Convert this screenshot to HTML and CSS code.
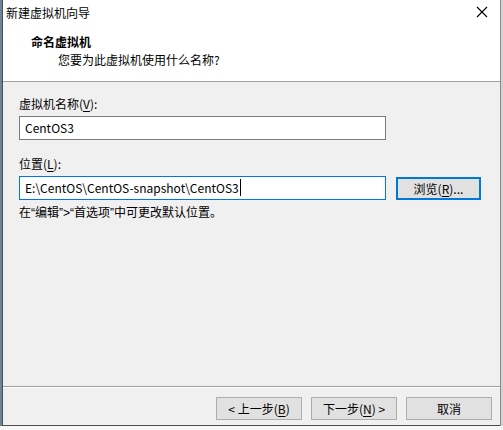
FILE: index.html
```html
<!DOCTYPE html>
<html lang="zh">
<head>
<meta charset="utf-8">
<link rel="stylesheet" href="styles.css">
</head>
<body>
<div class="screen">
  <div class="desk-left"></div>
  <div class="window">
    <div class="titlebar">
      <span class="title">新建虚拟机向导</span>
      <svg class="close" width="12" height="12" viewBox="0 0 12 12"><path d="M1 1L11 11M11 1L1 11" stroke="#000" stroke-width="1.1" fill="none"/></svg>
    </div>
    <div class="header">
      <div class="h-title">命名虚拟机</div>
      <div class="h-sub">您要为此虚拟机使用什么名称?</div>
    </div>
    <div class="body">
      <div class="label">虚拟机名称(<u>V</u>):</div>
      <div class="field">CentOS3</div>
      <div class="label label2">位置(<u>L</u>):</div>
      <div class="row">
        <div class="field focus"><span class="caret">E:\CentOS\CentOS-snapshot\CentOS3</span></div>
        <div class="btn browse">浏览(<u>R</u>)...</div>
      </div>
      <div class="hint">在<span class="q">“</span>编辑<span class="q">”&gt;“</span>首选项<span class="q">”</span>中可更改默认位置。</div>
    </div>
    <div class="footer">
      <div class="btn">&lt; 上一步(<u>B</u>)</div>
      <div class="btn">下一步(<u>N</u>) &gt;</div>
      <div class="btn">取消</div>
    </div>
  </div>
  <div class="desk-right"></div>
</div>
<div class="below"></div>
</body>
</html>
```
FILE: styles.css
```css
html, body {
  margin: 0;
  padding: 0;
}
body {
  width: 503px;
  height: 430px;
  overflow: hidden;
  background: #f4f4f4;
  font-family: "Noto Sans CJK SC", "Microsoft YaHei", sans-serif;
  font-size: 12px;
  color: #000;
}
.screen {
  display: flex;
  height: 426px;
}
.desk-left {
  width: 2px;
  background: #6c8597;
}
.desk-right {
  width: 2px;
  background: #d4d4d4;
  border-left: 1px solid #8a8a8a;
}
.window {
  width: 498px;
  border-left: 1px solid #4d4d4d;
  border-bottom: 1px solid #4d4d4d;
  background: #f0f0f0;
  display: flex;
  flex-direction: column;
}
.titlebar {
  height: 28px;
  background: #fff;
  display: flex;
  align-items: center;
  justify-content: space-between;
  padding: 0 12px 0 3px;
}
.title {
  line-height: 1;
  margin-top: -2px;
}
.close {
  margin-top: -4px;
}
.header {
  background: #fff;
  border-bottom: 1px solid #a0a0a0;
  padding-left: 28px;
  box-sizing: border-box;
  height: 54px;
}
.h-title {
  font-weight: bold;
  line-height: 18px;
  margin-top: 5px;
}
.h-sub {
  padding-left: 27px;
  line-height: 18px;
}
.body {
  flex: 1;
  padding: 13px 0 0 16px;
  border-bottom: 1px solid #a0a0a0;
  box-shadow: 0 1px 0 #fff;
}
.label {
  line-height: 18px;
  margin-bottom: 3px;
}
.label2 {
  margin-top: 15px;
}
u {
  text-decoration: underline;
  text-underline-offset: 2px;
}
.field {
  height: 22px;
  border: 1px solid #7a7a7a;
  background: #fff;
  padding-left: 5px;
  box-sizing: content-box;
  line-height: 22px;
  width: 360px;
}
.field.focus {
  border-color: #0078d7;
}
.caret {
  border-right: 1px solid #000;
  padding-right: 1px;
}
.row {
  display: flex;
  align-items: center;
  gap: 10px;
}
.btn {
  width: 84px;
  height: 21px;
  border: 1px solid #adadad;
  background: #e1e1e1;
  text-align: center;
  line-height: 21px;
}
.btn.browse {
  width: 81px;
  height: 19px;
  line-height: 19px;
  border: 2px solid #0078d7;
  margin-top: 1px;
}
.hint {
  line-height: 18px;
  margin-top: 3px;
}
.q {
  font-family: "Liberation Sans", "DejaVu Sans", sans-serif;
}
.footer {
  height: 38px;
  display: flex;
  justify-content: flex-end;
  gap: 9px;
  padding: 10px 8px 0 0;
  box-sizing: border-box;
}
.below {
  height: 4px;
  background: #f7f7f7;
}
```
